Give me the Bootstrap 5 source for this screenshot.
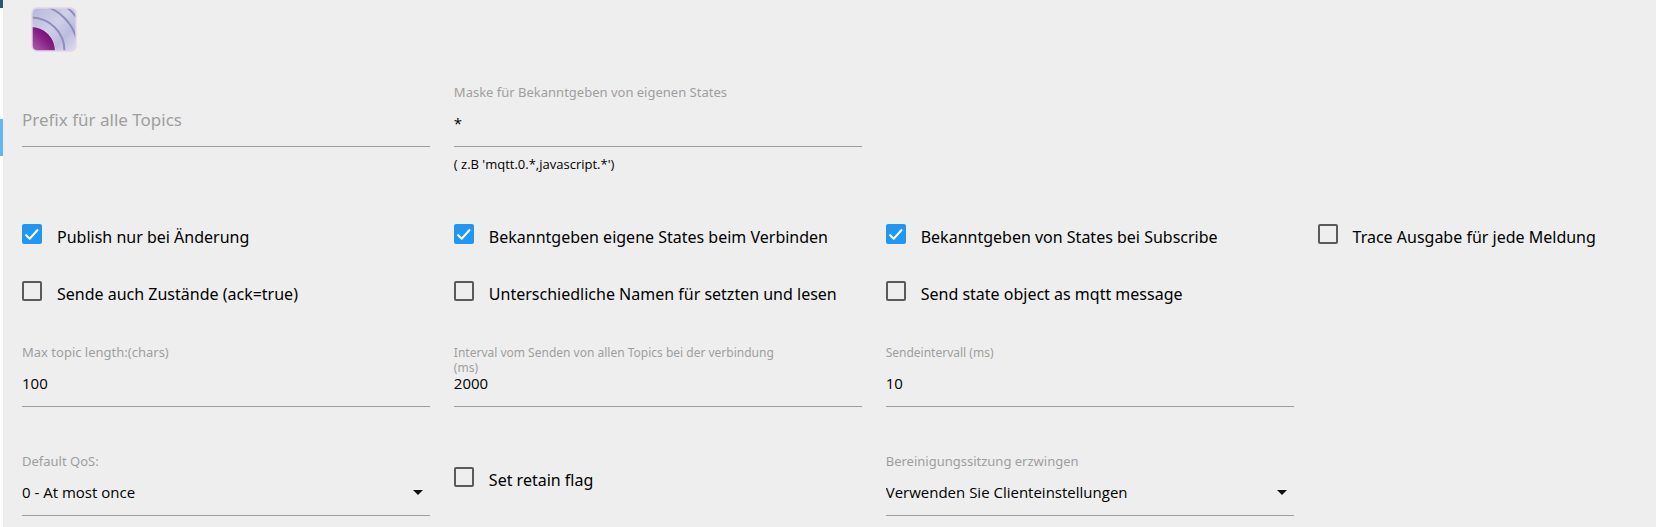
<!DOCTYPE html>
<html lang="de">
<head>
<meta charset="utf-8">
<meta name="viewport" content="width=device-width, initial-scale=1">
<title>MQTT Einstellungen</title>
<link href="https://cdn.jsdelivr.net/npm/bootstrap@5.3.0/dist/css/bootstrap.min.css" rel="stylesheet">
<style>
  body { background: #eee; color: #000; font-family: "Open Sans", "Noto Sans", sans-serif; font-size: 16px; overflow-x: hidden; }
  .edge-strip { width: 3px; background: #fff; }
  .edge-top { height: 8px; background: #2e5270; }
  .edge-active { height: 37px; margin-top: 111px; background: #64b5f6; }
  .settings { padding: 0 18px 0 19px; }
  .brand-bar { height: 85px; padding: 7px 0 0 9px; }
  .settings-grid { display: grid; grid-template-columns: 14fr 14fr 14fr 11fr; column-gap: 24px; }
  .settings-grid > * { min-width: 0; }
  .grid-masks { height: 139px; }
  .grid-checks { row-gap: 31px; height: 121px; align-content: start; }
  .grid-numbers { height: 109px; }
  .field-label { height: 16px; max-width: 80%; font-family: "Noto Sans", sans-serif; font-size: 13px; line-height: 15px; color: #9e9e9e; }
  .field-label.compact { font-size: 12px; }
  .field-label.resting { top: 23px; left: 0; height: auto; font-size: 17px; line-height: 24px; }
  .field-input { height: 46px; padding: 0 0 2px; border: 0; border-bottom: 1px solid #9e9e9e; border-radius: 0; background-color: transparent; color: #000; font-size: 15px; line-height: 24px; }
  .field-input:focus { background-color: transparent; box-shadow: none; border-color: #2196f3; }
  select.field-input { appearance: none; cursor: pointer; }
  .caret { right: 7px; top: 36px; width: 10px; height: 5px; pointer-events: none; }
  .hint { margin-top: 8px; font-size: 13px; line-height: 18px; }
  .check { gap: 15px; }
  .check .form-check-input { width: 20px; height: 20px; margin: 0; flex: none; border: 2px solid #5a5a5a; border-radius: 2px; background-color: transparent; }
  .check .form-check-input:checked { border-color: #2196f3; background-color: #2196f3; background-size: 20px 20px; background-position: center;
    background-image: url("data:image/svg+xml,%3Csvg xmlns='http://www.w3.org/2000/svg' viewBox='0 0 20 20'%3E%3Cpath d='M3.5 10.5l4.2 4.2L16 5.5' fill='none' stroke='white' stroke-width='2'/%3E%3C/svg%3E"); }
  .check label { font-family: "Noto Sans", sans-serif; line-height: 26px; white-space: nowrap; }
  .check-retain { margin-top: 13px; }
</style>
</head>
<body>
<div class="d-flex min-vh-100">
  <div class="edge-strip flex-shrink-0"><div class="edge-top"></div><div class="edge-active"></div></div>
  <main class="settings flex-grow-1">
    <header class="brand-bar">
      <svg class="d-block" width="46" height="45" viewBox="0 0 46 45" role="img" aria-label="MQTT">
        <defs>
          <linearGradient id="sky" x1="0" y1="0" x2="1" y2="1"><stop offset="0" stop-color="#b4b4da"/><stop offset=".45" stop-color="#d0d0e8"/><stop offset=".7" stop-color="#bcbcdf"/><stop offset="1" stop-color="#e2e0f1"/></linearGradient>
          <linearGradient id="plum" gradientUnits="userSpaceOnUse" x1="0" y1="44" x2="18" y2="26"><stop offset="0" stop-color="#b267b2"/><stop offset=".7" stop-color="#841f84"/><stop offset="1" stop-color="#750f75"/></linearGradient>
          <clipPath id="tile"><rect x="1" y="1" width="44" height="43" rx="5"/></clipPath>
        </defs>
        <g clip-path="url(#tile)">
          <rect width="46" height="45" fill="url(#sky)"/>
          <g fill="none" stroke="#8e8ebd" stroke-width="2"><circle cx="0" cy="44" r="33.5"/><circle cx="0" cy="44" r="47"/><circle cx="0" cy="44" r="56.5"/></g>
          <circle cx="0" cy="44" r="24.5" fill="#e6dff0"/>
          <circle cx="0" cy="44" r="24" fill="url(#plum)"/>
        </g>
        <rect x="1" y="1" width="44" height="43" rx="5" fill="none" stroke="#e6d3ea" stroke-width="1.4"/>
      </svg>
    </header>

    <div class="settings-grid grid-masks">
      <div class="position-relative pt-3">
        <label class="field-label resting position-absolute" for="prefix">Prefix für alle Topics</label>
        <input class="form-control field-input" id="prefix" type="text">
      </div>
      <div>
        <label class="field-label d-block" for="mask">Maske für Bekanntgeben von eigenen States</label>
        <input class="form-control field-input" id="mask" type="text" value="*">
        <div class="hint">( z.B 'mqtt.0.*,javascript.*')</div>
      </div>
    </div>

    <div class="settings-grid grid-checks">
      <div class="check d-flex"><input class="form-check-input" type="checkbox" id="c1" checked><label for="c1">Publish nur bei Änderung</label></div>
      <div class="check d-flex"><input class="form-check-input" type="checkbox" id="c2" checked><label for="c2">Bekanntgeben eigene States beim Verbinden</label></div>
      <div class="check d-flex"><input class="form-check-input" type="checkbox" id="c3" checked><label for="c3">Bekanntgeben von States bei Subscribe</label></div>
      <div class="check d-flex"><input class="form-check-input" type="checkbox" id="c4"><label for="c4">Trace Ausgabe für jede Meldung</label></div>
      <div class="check d-flex"><input class="form-check-input" type="checkbox" id="c5"><label for="c5">Sende auch Zustände (ack=true)</label></div>
      <div class="check d-flex"><input class="form-check-input" type="checkbox" id="c6"><label for="c6">Unterschiedliche Namen für setzten und lesen</label></div>
      <div class="check d-flex"><input class="form-check-input" type="checkbox" id="c7"><label for="c7">Send state object as mqtt message</label></div>
    </div>

    <div class="settings-grid grid-numbers">
      <div><label class="field-label d-block" for="len">Max topic length:(chars)</label><input class="form-control field-input" id="len" type="text" value="100"></div>
      <div><label class="field-label compact d-block" for="interval">Interval vom Senden von allen Topics bei der verbindung (ms)</label><input class="form-control field-input position-relative" id="interval" type="text" value="2000"></div>
      <div><label class="field-label compact d-block" for="send">Sendeintervall (ms)</label><input class="form-control field-input" id="send" type="text" value="10"></div>
    </div>

    <div class="settings-grid">
      <div class="position-relative">
        <label class="field-label d-block" for="qos">Default QoS:</label>
        <select class="w-100 field-input" id="qos"><option>0 - At most once</option></select>
        <svg class="caret position-absolute" viewBox="0 0 10 5" aria-hidden="true"><path d="M0 0h10L5 5z" fill="#111"/></svg>
      </div>
      <div class="check check-retain d-flex"><input class="form-check-input" type="checkbox" id="c8"><label for="c8">Set retain flag</label></div>
      <div class="position-relative">
        <label class="field-label d-block" for="clean">Bereinigungssitzung erzwingen</label>
        <select class="w-100 field-input" id="clean"><option>Verwenden Sie Clienteinstellungen</option></select>
        <svg class="caret position-absolute" viewBox="0 0 10 5" aria-hidden="true"><path d="M0 0h10L5 5z" fill="#111"/></svg>
      </div>
    </div>
  </main>
</div>
<script src="https://cdn.jsdelivr.net/npm/bootstrap@5.3.0/dist/js/bootstrap.bundle.min.js"></script>
</body>
</html>
